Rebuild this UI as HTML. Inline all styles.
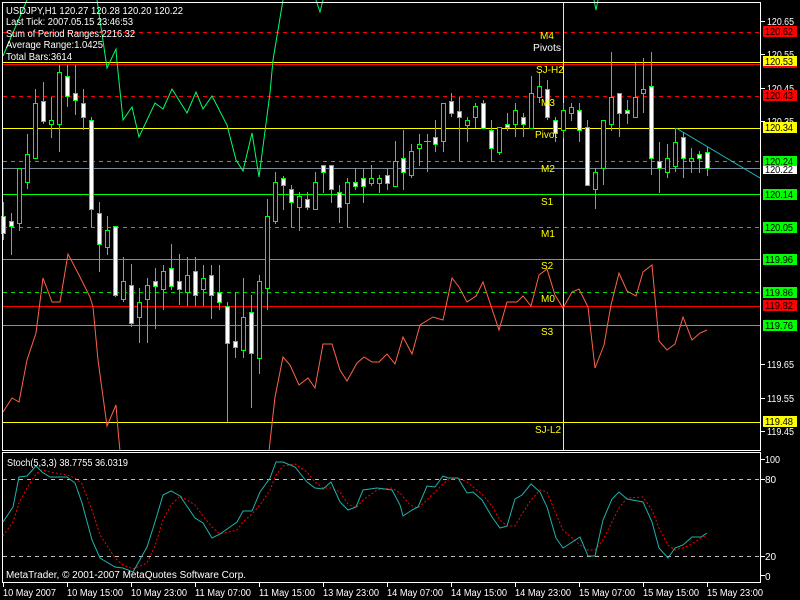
<!DOCTYPE html>
<html><head><meta charset="utf-8"><style>
html,body{margin:0;padding:0;background:#000;width:800px;height:600px;overflow:hidden}
svg{display:block}
text{font-family:"Liberation Sans",sans-serif;font-size:10px}
</style></head><body>
<svg width="800" height="600" viewBox="0 0 800 600" xmlns="http://www.w3.org/2000/svg">
<rect width="800" height="600" fill="#000"/>
<g shape-rendering="crispEdges" stroke-width="1">
<line x1="3" y1="32.5" x2="760" y2="32.5" stroke="#ff0000" stroke-dasharray="4,4"/>
<line x1="3" y1="62.5" x2="760" y2="62.5" stroke="#ffff00"/>
<line x1="3" y1="64.5" x2="760" y2="64.5" stroke="#ff0000"/>
<line x1="3" y1="96.5" x2="760" y2="96.5" stroke="#ff0000" stroke-dasharray="4,4"/>
<line x1="3" y1="128.5" x2="760" y2="128.5" stroke="#ffff00"/>
<line x1="3" y1="161.5" x2="760" y2="161.5" stroke="#00dd00" stroke-dasharray="4,4"/>
<line x1="3" y1="168.5" x2="760" y2="168.5" stroke="#778899"/>
<line x1="3" y1="194.5" x2="760" y2="194.5" stroke="#00ff00"/>
<line x1="3" y1="227.5" x2="760" y2="227.5" stroke="#00dd00" stroke-dasharray="4,4"/>
<line x1="3" y1="259.5" x2="760" y2="259.5" stroke="#33cc33"/>
<line x1="3" y1="292.5" x2="760" y2="292.5" stroke="#00dd00" stroke-dasharray="4,4"/>
<line x1="3" y1="306.5" x2="760" y2="306.5" stroke="#ff0000"/>
<line x1="3" y1="325.5" x2="760" y2="325.5" stroke="#33cc33"/>
<line x1="3" y1="422.5" x2="760" y2="422.5" stroke="#ffff00"/>
<line x1="563.5" y1="3" x2="563.5" y2="451" stroke="#ffff00"/>
</g>
<polyline fill="none" stroke="#00ff66" stroke-width="1" points="3,56 27,0"/>
<polyline fill="none" stroke="#00ff66" stroke-width="1" points="97,0 107,68 116,49 117,62 123,120 132,107 139,137 155,103 163,109 172,89 187,113 196,92 203,109 212,96 227,125 236,160 243,171 252,133 259,177 270,93 273,60 283,0"/>
<polyline fill="none" stroke="#00ff66" stroke-width="1" points="316,0 320,12 323,0"/>
<polyline fill="none" stroke="#00ff66" stroke-width="1" points="594,0 596,10 598,0"/>
<polyline fill="none" stroke="#ff6347" stroke-width="1" points="3,412 12,398 19,402 27,360 36,333 43,278 52,302 60,302 68,254 80,277 90,297 93,307 98,360 107,426 116,405 118,430 120,451"/>
<polyline fill="none" stroke="#ff6347" stroke-width="1" points="269,451 275,397 283,357 290,365 299,385 308,378 315,388 323,344 332,344 340,370 347,381 357,363 364,357 372,362 379,362 387,354 395,364 403,337 412,354 420,325 433,317 443,320 452,278 459,287 467,302 476,296 483,282 490,303 499,330 507,302 517,302 523,296 531,306 539,275 547,269 555,295 563,308 572,292 579,289 588,307 595,368 604,345 611,305 619,273 627,291 636,296 643,272 652,265 659,341 667,350 675,344 683,317 692,340 700,333 707,330"/>
<line x1="676" y1="128" x2="760" y2="178" stroke="#20c0c0" stroke-width="1"/>
<g stroke="#00ff00" stroke-width="1" shape-rendering="crispEdges">
<line x1="3.5" y1="202" x2="3.5" y2="240"/><rect x="1.5" y="216.5" width="4" height="17" fill="#fff"/>
<line x1="11.5" y1="213" x2="11.5" y2="255"/><rect x="9.5" y="221.5" width="4" height="5" fill="#fff"/>
<line x1="19.5" y1="168" x2="19.5" y2="231"/><rect x="17.5" y="168.5" width="4" height="55" fill="#000"/>
<line x1="27.5" y1="134" x2="27.5" y2="189"/><rect x="25.5" y="154.5" width="4" height="28" fill="#000"/>
<line x1="35.5" y1="89" x2="35.5" y2="158"/><rect x="33.5" y="103.5" width="4" height="55" fill="#000"/>
<line x1="43.5" y1="82" x2="43.5" y2="124"/><rect x="41.5" y="101.5" width="4" height="20" fill="#fff"/>
<line x1="51.5" y1="97" x2="51.5" y2="138"/><rect x="49.5" y="120.5" width="4" height="4" fill="#000"/>
<line x1="59.5" y1="65" x2="59.5" y2="152"/><rect x="57.5" y="72.5" width="4" height="52" fill="#000"/>
<line x1="67.5" y1="65" x2="67.5" y2="107"/><rect x="65.5" y="76.5" width="4" height="20" fill="#fff"/>
<line x1="75.5" y1="65" x2="75.5" y2="115"/><rect x="73.5" y="93.5" width="4" height="7" fill="#fff"/>
<line x1="83.5" y1="89" x2="83.5" y2="130"/><rect x="81.5" y="103.5" width="4" height="14" fill="#fff"/>
<line x1="91.5" y1="117" x2="91.5" y2="227"/><rect x="89.5" y="120.5" width="4" height="89" fill="#fff"/>
<line x1="99.5" y1="202" x2="99.5" y2="272"/><rect x="97.5" y="213.5" width="4" height="31" fill="#fff"/>
<line x1="107.5" y1="216" x2="107.5" y2="255"/><rect x="105.5" y="230.5" width="4" height="17" fill="#000"/>
<line x1="115.5" y1="226" x2="115.5" y2="297"/><rect x="113.5" y="226.5" width="4" height="69" fill="#fff"/>
<line x1="123.5" y1="257" x2="123.5" y2="302"/><rect x="121.5" y="281.5" width="4" height="18" fill="#000"/>
<line x1="131.5" y1="264" x2="131.5" y2="327"/><rect x="129.5" y="285.5" width="4" height="38" fill="#fff"/>
<line x1="139.5" y1="288" x2="139.5" y2="343"/><rect x="137.5" y="302.5" width="4" height="15" fill="#000"/>
<line x1="147.5" y1="278" x2="147.5" y2="343"/><rect x="145.5" y="285.5" width="4" height="14" fill="#000"/>
<line x1="155.5" y1="268" x2="155.5" y2="329"/><rect x="153.5" y="281.5" width="4" height="5" fill="#fff"/>
<line x1="163.5" y1="265" x2="163.5" y2="310"/><rect x="161.5" y="271.5" width="4" height="18" fill="#000"/>
<line x1="171.5" y1="244" x2="171.5" y2="290"/><rect x="169.5" y="268.5" width="4" height="18" fill="#fff"/>
<line x1="179.5" y1="254" x2="179.5" y2="305"/><rect x="177.5" y="281.5" width="4" height="8" fill="#fff"/>
<line x1="187.5" y1="257" x2="187.5" y2="306"/><rect x="185.5" y="275.5" width="4" height="17" fill="#000"/>
<line x1="195.5" y1="257" x2="195.5" y2="306"/><rect x="193.5" y="271.5" width="4" height="24" fill="#fff"/>
<line x1="203.5" y1="265" x2="203.5" y2="306"/><rect x="201.5" y="278.5" width="4" height="11" fill="#000"/>
<line x1="211.5" y1="265" x2="211.5" y2="319"/><rect x="209.5" y="275.5" width="4" height="20" fill="#fff"/>
<line x1="219.5" y1="265" x2="219.5" y2="310"/><rect x="217.5" y="292.5" width="4" height="10" fill="#fff"/>
<line x1="227.5" y1="302" x2="227.5" y2="422"/><rect x="225.5" y="306.5" width="4" height="37" fill="#fff"/>
<line x1="235.5" y1="292" x2="235.5" y2="358"/><rect x="233.5" y="341.5" width="4" height="6" fill="#fff"/>
<line x1="243.5" y1="278" x2="243.5" y2="358"/><rect x="241.5" y="317.5" width="4" height="33" fill="#000"/>
<line x1="251.5" y1="295" x2="251.5" y2="408"/><rect x="249.5" y="312.5" width="4" height="41" fill="#fff"/>
<line x1="259.5" y1="275" x2="259.5" y2="374"/><rect x="257.5" y="281.5" width="4" height="77" fill="#000"/>
<line x1="267.5" y1="199" x2="267.5" y2="310"/><rect x="265.5" y="216.5" width="4" height="72" fill="#000"/>
<line x1="275.5" y1="172" x2="275.5" y2="224"/><rect x="273.5" y="182.5" width="4" height="39" fill="#000"/>
<line x1="283.5" y1="176" x2="283.5" y2="210"/><rect x="281.5" y="178.5" width="4" height="7" fill="#fff"/>
<line x1="291.5" y1="185" x2="291.5" y2="227"/><rect x="289.5" y="189.5" width="4" height="13" fill="#fff"/>
<line x1="299.5" y1="192" x2="299.5" y2="231"/><rect x="297.5" y="196.5" width="4" height="11" fill="#000"/>
<line x1="307.5" y1="192" x2="307.5" y2="210"/><rect x="305.5" y="199.5" width="4" height="8" fill="#fff"/>
<line x1="315.5" y1="172" x2="315.5" y2="210"/><rect x="313.5" y="182.5" width="4" height="27" fill="#000"/>
<line x1="323.5" y1="165" x2="323.5" y2="193"/><rect x="321.5" y="165.5" width="4" height="7" fill="#fff"/>
<line x1="331.5" y1="165" x2="331.5" y2="203"/><rect x="329.5" y="165.5" width="4" height="24" fill="#fff"/>
<line x1="339.5" y1="185" x2="339.5" y2="223"/><rect x="337.5" y="192.5" width="4" height="15" fill="#fff"/>
<line x1="347.5" y1="178" x2="347.5" y2="227"/><rect x="345.5" y="182.5" width="4" height="21" fill="#000"/>
<line x1="355.5" y1="168" x2="355.5" y2="190"/><rect x="353.5" y="182.5" width="4" height="4" fill="#fff"/>
<line x1="363.5" y1="168" x2="363.5" y2="203"/><rect x="361.5" y="178.5" width="4" height="8" fill="#fff"/>
<line x1="371.5" y1="165" x2="371.5" y2="186"/><rect x="369.5" y="178.5" width="4" height="5" fill="#000"/>
<line x1="379.5" y1="175" x2="379.5" y2="193"/><rect x="377.5" y="178.5" width="4" height="5" fill="#000"/>
<line x1="387.5" y1="168" x2="387.5" y2="190"/><rect x="385.5" y="175.5" width="4" height="8" fill="#fff"/>
<line x1="395.5" y1="141" x2="395.5" y2="186"/><rect x="393.5" y="161.5" width="4" height="25" fill="#000"/>
<line x1="403.5" y1="130" x2="403.5" y2="190"/><rect x="401.5" y="158.5" width="4" height="14" fill="#fff"/>
<line x1="411.5" y1="144" x2="411.5" y2="178"/><rect x="409.5" y="151.5" width="4" height="24" fill="#000"/>
<line x1="419.5" y1="134" x2="419.5" y2="166"/><rect x="417.5" y="144.5" width="4" height="4" fill="#000"/>
<line x1="427.5" y1="134" x2="427.5" y2="172"/><line x1="424" y1="141.5" x2="431" y2="141.5"/>
<line x1="435.5" y1="120" x2="435.5" y2="152"/><rect x="433.5" y="137.5" width="4" height="7" fill="#fff"/>
<line x1="443.5" y1="103" x2="443.5" y2="152"/><rect x="441.5" y="103.5" width="4" height="38" fill="#000"/>
<line x1="451.5" y1="93" x2="451.5" y2="117"/><rect x="449.5" y="101.5" width="4" height="12" fill="#fff"/>
<line x1="459.5" y1="97" x2="459.5" y2="161"/><rect x="457.5" y="111.5" width="4" height="6" fill="#fff"/>
<line x1="467.5" y1="117" x2="467.5" y2="142"/><rect x="465.5" y="120.5" width="4" height="5" fill="#000"/>
<line x1="475.5" y1="103" x2="475.5" y2="128"/><rect x="473.5" y="106.5" width="4" height="11" fill="#000"/>
<line x1="483.5" y1="100" x2="483.5" y2="128"/><rect x="481.5" y="103.5" width="4" height="25" fill="#fff"/>
<line x1="491.5" y1="120" x2="491.5" y2="162"/><rect x="489.5" y="130.5" width="4" height="18" fill="#fff"/>
<line x1="499.5" y1="127" x2="499.5" y2="155"/><rect x="497.5" y="127.5" width="4" height="25" fill="#000"/>
<line x1="507.5" y1="113" x2="507.5" y2="131"/><rect x="505.5" y="124.5" width="4" height="3" fill="#fff"/>
<line x1="515.5" y1="103" x2="515.5" y2="137"/><rect x="513.5" y="110.5" width="4" height="14" fill="#000"/>
<line x1="523.5" y1="113" x2="523.5" y2="137"/><rect x="521.5" y="117.5" width="4" height="7" fill="#fff"/>
<line x1="531.5" y1="76" x2="531.5" y2="128"/><rect x="529.5" y="93.5" width="4" height="35" fill="#000"/>
<line x1="539.5" y1="72" x2="539.5" y2="103"/><rect x="537.5" y="86.5" width="4" height="11" fill="#000"/>
<line x1="547.5" y1="80" x2="547.5" y2="120"/><rect x="545.5" y="89.5" width="4" height="28" fill="#fff"/>
<line x1="555.5" y1="117" x2="555.5" y2="142"/><rect x="553.5" y="120.5" width="4" height="13" fill="#fff"/>
<line x1="563.5" y1="103" x2="563.5" y2="138"/><rect x="561.5" y="110.5" width="4" height="20" fill="#000"/>
<line x1="571.5" y1="103" x2="571.5" y2="121"/><rect x="569.5" y="107.5" width="4" height="6" fill="#000"/>
<line x1="579.5" y1="103" x2="579.5" y2="142"/><rect x="577.5" y="110.5" width="4" height="20" fill="#fff"/>
<line x1="587.5" y1="120" x2="587.5" y2="185"/><rect x="585.5" y="127.5" width="4" height="58" fill="#fff"/>
<line x1="595.5" y1="168" x2="595.5" y2="209"/><rect x="593.5" y="172.5" width="4" height="17" fill="#000"/>
<line x1="603.5" y1="120" x2="603.5" y2="185"/><rect x="601.5" y="120.5" width="4" height="48" fill="#000"/>
<line x1="611.5" y1="52" x2="611.5" y2="131"/><rect x="609.5" y="97.5" width="4" height="27" fill="#000"/>
<line x1="619.5" y1="95" x2="619.5" y2="137"/><rect x="617.5" y="93.5" width="4" height="20" fill="#fff"/>
<line x1="627.5" y1="100" x2="627.5" y2="124"/><rect x="625.5" y="110.5" width="4" height="3" fill="#fff"/>
<line x1="635.5" y1="63" x2="635.5" y2="117"/><rect x="633.5" y="97.5" width="4" height="20" fill="#000"/>
<line x1="643.5" y1="58" x2="643.5" y2="113"/><rect x="641.5" y="89.5" width="4" height="4" fill="#000"/>
<line x1="651.5" y1="52" x2="651.5" y2="175"/><rect x="649.5" y="86.5" width="4" height="72" fill="#fff"/>
<line x1="659.5" y1="142" x2="659.5" y2="193"/><rect x="657.5" y="161.5" width="4" height="7" fill="#fff"/>
<line x1="667.5" y1="144" x2="667.5" y2="178"/><rect x="665.5" y="158.5" width="4" height="14" fill="#000"/>
<line x1="675.5" y1="128" x2="675.5" y2="172"/><rect x="673.5" y="142.5" width="4" height="24" fill="#000"/>
<line x1="683.5" y1="132" x2="683.5" y2="178"/><rect x="681.5" y="137.5" width="4" height="21" fill="#fff"/>
<line x1="691.5" y1="148" x2="691.5" y2="173"/><rect x="689.5" y="158.5" width="4" height="3" fill="#000"/>
<line x1="699.5" y1="151" x2="699.5" y2="173"/><rect x="697.5" y="154.5" width="4" height="4" fill="#fff"/>
<line x1="707.5" y1="147" x2="707.5" y2="176"/><rect x="705.5" y="152.5" width="4" height="16" fill="#fff"/>
</g>
<g fill="#ffff00" font-size="10">
<text x="540" y="39">M4</text>
<text x="533" y="51" fill="#fff" textLength="28" lengthAdjust="spacingAndGlyphs">Pivots</text>
<text x="536" y="73">SJ-H2</text>
<text x="541" y="106">M3</text>
<text x="535" y="138">Pivot</text>
<text x="541" y="172">M2</text>
<text x="541" y="205">S1</text>
<text x="541" y="237">M1</text>
<text x="541" y="269">S2</text>
<text x="541" y="302">M0</text>
<text x="541" y="335">S3</text>
<text x="535" y="433">SJ-L2</text>
</g>
<g fill="#fff" font-size="10" lengthAdjust="spacingAndGlyphs">
<text x="6" y="14" textLength="177" lengthAdjust="spacingAndGlyphs">USDJPY,H1  120.27  120.28 120.20 120.22</text>
<text x="6" y="25" textLength="127" lengthAdjust="spacingAndGlyphs">Last Tick: 2007.05.15 23:46:53</text>
<text x="6" y="37" textLength="129" lengthAdjust="spacingAndGlyphs">Sum of Period Ranges:2216.32</text>
<text x="6" y="48" textLength="97" lengthAdjust="spacingAndGlyphs">Average Range:1.0425</text>
<text x="6" y="60" textLength="66" lengthAdjust="spacingAndGlyphs">Total Bars:3614</text>
</g>
<g fill="none" stroke="#fff" stroke-width="1" shape-rendering="crispEdges">
<rect x="2.5" y="2.5" width="758" height="448"/>
<rect x="2.5" y="452.5" width="758" height="130"/>
</g>
<g stroke="#fff" shape-rendering="crispEdges">
<line x1="761" y1="21.5" x2="765" y2="21.5"/><line x1="761" y1="54.5" x2="765" y2="54.5"/><line x1="761" y1="88.5" x2="765" y2="88.5"/><line x1="761" y1="121.5" x2="765" y2="121.5"/><line x1="761" y1="364.5" x2="765" y2="364.5"/><line x1="761" y1="398.5" x2="765" y2="398.5"/><line x1="761" y1="431.5" x2="765" y2="431.5"/>
<line x1="761" y1="459.5" x2="765" y2="459.5"/><line x1="761" y1="479.5" x2="765" y2="479.5"/><line x1="761" y1="556.5" x2="765" y2="556.5"/><line x1="761" y1="575.5" x2="765" y2="575.5"/>
</g>
<g fill="#fff" font-size="10">
<text x="767" y="25" textLength="27" lengthAdjust="spacingAndGlyphs">120.65</text>
<text x="767" y="58" textLength="27" lengthAdjust="spacingAndGlyphs">120.55</text>
<text x="767" y="92" textLength="27" lengthAdjust="spacingAndGlyphs">120.45</text>
<text x="767" y="125" textLength="27" lengthAdjust="spacingAndGlyphs">120.35</text>
<text x="767" y="368" textLength="27" lengthAdjust="spacingAndGlyphs">119.65</text>
<text x="767" y="402" textLength="27" lengthAdjust="spacingAndGlyphs">119.55</text>
<text x="767" y="435" textLength="27" lengthAdjust="spacingAndGlyphs">119.45</text>
<text x="765" y="463" textLength="15" lengthAdjust="spacingAndGlyphs">100</text>
<text x="765" y="483">80</text>
<text x="765" y="560">20</text>
<text x="765" y="580">0</text>
</g>
<g font-size="10" shape-rendering="crispEdges">
<rect x="763" y="26" width="34" height="11" fill="#ff0000"/><text x="765" y="35" fill="#000" textLength="28" lengthAdjust="spacingAndGlyphs">120.62</text>
<rect x="763" y="56" width="34" height="12" fill="#ffff00"/><rect x="763" y="66" width="34" height="2" fill="#ff0000"/><text x="765" y="65" fill="#000" textLength="28" lengthAdjust="spacingAndGlyphs">120.53</text>
<rect x="763" y="90" width="34" height="11" fill="#ff0000"/><text x="765" y="99" fill="#000" textLength="28" lengthAdjust="spacingAndGlyphs">120.43</text>
<rect x="763" y="122" width="34" height="11" fill="#ffff00"/><text x="765" y="131" fill="#000" textLength="28" lengthAdjust="spacingAndGlyphs">120.34</text>
<rect x="763" y="156" width="34" height="10" fill="#00ff00"/><text x="765" y="165" fill="#000" textLength="28" lengthAdjust="spacingAndGlyphs">120.24</text>
<rect x="763" y="166" width="34" height="8" fill="#fff"/><text x="765" y="173" fill="#000" textLength="28" lengthAdjust="spacingAndGlyphs">120.22</text>
<rect x="763" y="189" width="34" height="11" fill="#00ff00"/><text x="765" y="198" fill="#000" textLength="28" lengthAdjust="spacingAndGlyphs">120.14</text>
<rect x="763" y="222" width="34" height="11" fill="#00ff00"/><text x="765" y="231" fill="#000" textLength="28" lengthAdjust="spacingAndGlyphs">120.05</text>
<rect x="763" y="254" width="34" height="11" fill="#00ff00"/><text x="765" y="263" fill="#000" textLength="28" lengthAdjust="spacingAndGlyphs">119.96</text>
<rect x="763" y="287" width="34" height="11" fill="#00ff00"/><text x="765" y="296" fill="#000" textLength="28" lengthAdjust="spacingAndGlyphs">119.86</text>
<rect x="763" y="300" width="34" height="11" fill="#ff0000"/><text x="765" y="309" fill="#000" textLength="28" lengthAdjust="spacingAndGlyphs">119.82</text>
<rect x="763" y="320" width="34" height="11" fill="#00ff00"/><text x="765" y="329" fill="#000" textLength="28" lengthAdjust="spacingAndGlyphs">119.76</text>
<rect x="763" y="416" width="34" height="11" fill="#ffff00"/><text x="765" y="425" fill="#000" textLength="28" lengthAdjust="spacingAndGlyphs">119.48</text>
</g>
<g stroke="#c0c0c0" stroke-dasharray="4,4" shape-rendering="crispEdges">
<line x1="3" y1="479.5" x2="760" y2="479.5"/>
<line x1="3" y1="556.5" x2="760" y2="556.5"/>
</g>
<polyline fill="none" stroke="#ff0000" stroke-width="1" stroke-dasharray="2,2" points="3,536 13,522 19,503 27,488 36,474 42,470 50,472 67,475 75,478 82,484 92,510 100,535 115,558 123,565 133,569 147,563 155,546 163,520 171,505 180,496 195,505 203,516 212,527 220,534 237,530 243,522 252,514 260,505 270,490 276,475 283,466 295,464 307,472 315,482 323,488 331,488 340,492 348,504 356,508 363,500 377,490 392,488 400,493 410,505 418,508 427,500 435,492 443,484 448,480 458,478 467,482 473,487 482,494 492,506 500,520 507,526 515,526 522,514 531,500 540,490 547,492 556,514 563,530 580,545 588,550 595,550 603,540 612,522 619,508 627,498 643,497 652,510 659,528 668,545 675,550 683,548 692,544 701,538 707,535"/>
<polyline fill="none" stroke="#20b2aa" stroke-width="1" points="3,522 13,507 19,477 27,476 36,466 42,472 50,477 67,477 75,483 82,503 92,540 100,558 115,567 123,568 133,572 147,547 155,522 163,495 171,491 180,496 195,518 203,523 212,538 220,534 237,522 243,511 252,511 260,492 270,478 276,462 283,462 295,467 307,482 315,488 323,489 331,482 340,502 348,510 356,507 363,490 377,488 392,490 400,505 403,516 412,510 418,507 427,486 435,487 443,476 448,478 458,478 467,493 473,492 482,500 492,517 500,528 507,526 515,499 522,495 531,484 540,492 547,507 556,538 563,548 580,537 588,556 595,556 603,520 612,499 619,492 627,499 643,502 652,522 659,548 668,558 675,548 683,545 692,537 701,537 707,533"/>
<g fill="#fff" font-size="10">
<text x="7" y="466" textLength="121" lengthAdjust="spacingAndGlyphs">Stoch(5,3,3) 38.7755 36.0319</text>
<text x="6" y="578" textLength="240" lengthAdjust="spacingAndGlyphs">MetaTrader, © 2001-2007 MetaQuotes Software Corp.</text>
</g>
<g stroke="#fff" shape-rendering="crispEdges">
<line x1="3.5" y1="583" x2="3.5" y2="587"/><line x1="67.5" y1="583" x2="67.5" y2="587"/><line x1="131.5" y1="583" x2="131.5" y2="587"/><line x1="195.5" y1="583" x2="195.5" y2="587"/><line x1="259.5" y1="583" x2="259.5" y2="587"/><line x1="323.5" y1="583" x2="323.5" y2="587"/><line x1="387.5" y1="583" x2="387.5" y2="587"/><line x1="451.5" y1="583" x2="451.5" y2="587"/><line x1="515.5" y1="583" x2="515.5" y2="587"/><line x1="579.5" y1="583" x2="579.5" y2="587"/><line x1="643.5" y1="583" x2="643.5" y2="587"/><line x1="707.5" y1="583" x2="707.5" y2="587"/>
</g>
<g fill="#fff" font-size="10">
<text x="3" y="596" textLength="53" lengthAdjust="spacingAndGlyphs">10 May 2007</text>
<text x="67" y="596" textLength="56" lengthAdjust="spacingAndGlyphs">10 May 15:00</text>
<text x="131" y="596" textLength="56" lengthAdjust="spacingAndGlyphs">10 May 23:00</text>
<text x="195" y="596" textLength="56" lengthAdjust="spacingAndGlyphs">11 May 07:00</text>
<text x="259" y="596" textLength="56" lengthAdjust="spacingAndGlyphs">11 May 15:00</text>
<text x="323" y="596" textLength="56" lengthAdjust="spacingAndGlyphs">13 May 23:00</text>
<text x="387" y="596" textLength="56" lengthAdjust="spacingAndGlyphs">14 May 07:00</text>
<text x="451" y="596" textLength="56" lengthAdjust="spacingAndGlyphs">14 May 15:00</text>
<text x="515" y="596" textLength="56" lengthAdjust="spacingAndGlyphs">14 May 23:00</text>
<text x="579" y="596" textLength="56" lengthAdjust="spacingAndGlyphs">15 May 07:00</text>
<text x="643" y="596" textLength="56" lengthAdjust="spacingAndGlyphs">15 May 15:00</text>
<text x="707" y="596" textLength="56" lengthAdjust="spacingAndGlyphs">15 May 23:00</text>
</g>
</svg>
</body></html>
